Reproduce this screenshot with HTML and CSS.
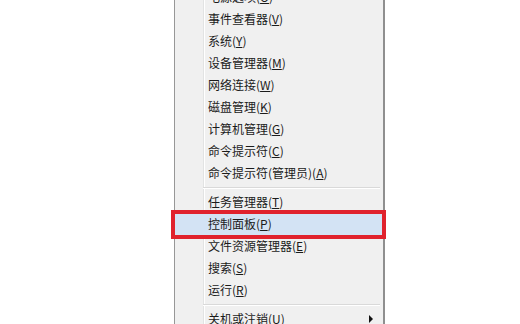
FILE: index.html
```html
<!DOCTYPE html>
<html lang="zh-CN">
<head>
<meta charset="utf-8">
<link rel="stylesheet" href="styles.css">
</head>
<body>
<div class="page">
  <div class="menu">
    <div class="item">电源选项(<u>O</u>)</div>
    <div class="item">事件查看器(<u>V</u>)</div>
    <div class="item">系统(<u>Y</u>)</div>
    <div class="item">设备管理器(<u>M</u>)</div>
    <div class="item">网络连接(<u>W</u>)</div>
    <div class="item">磁盘管理(<u>K</u>)</div>
    <div class="item">计算机管理(<u>G</u>)</div>
    <div class="item">命令提示符(<u>C</u>)</div>
    <div class="item">命令提示符(管理员)(<u>A</u>)</div>
    <div class="sep"></div>
    <div class="item">任务管理器(<u>T</u>)</div>
    <div class="item active">控制面板(<u>P</u>)<span class="mark"></span></div>
    <div class="item">文件资源管理器(<u>E</u>)</div>
    <div class="item">搜索(<u>S</u>)</div>
    <div class="item">运行(<u>R</u>)</div>
    <div class="sep"></div>
    <div class="item sub">关机或注销(<u>U</u>)<span class="arrow"></span></div>
    <div class="item">桌面(<u>D</u>)</div>
  </div>
</div>
</body>
</html>
```
FILE: styles.css
```css
html, body {
  margin: 0;
  padding: 0;
  background: #ffffff;
  overflow: hidden;
}
.page {
  width: 520px;
  height: 324px;
  overflow: hidden;
  display: flex;
}
.menu {
  margin-left: 174px;
  margin-top: -14px;
  width: 208px;
  align-self: flex-start;
  background: #f0f0f0;
  border-left: 1px solid #979797;
  border-right: 2px solid #8f8f8f;
  display: flex;
  flex-direction: column;
  font-family: "Noto Sans CJK SC", "Microsoft YaHei", sans-serif;
  font-size: 12px;
  color: #1b1b1b;
  background-image: linear-gradient(to right, transparent 28px, #e2e3e3 28px, #e2e3e3 29px, #ffffff 29px, #ffffff 30px, transparent 30px);
}
.item {
  position: relative;
  height: 22px;
  line-height: 22px;
  padding-left: 33px;
  white-space: nowrap;
}
.item u {
  text-decoration: underline;
  text-underline-offset: 1px;
}
.item.active {
  background: #d3e3f4;
}
.mark {
  position: absolute;
  left: -4px;
  right: -3px;
  top: -3px;
  bottom: -4px;
  border: 4px solid #e0222d;
}
.sep {
  height: 7px;
  margin-left: 28px;
  margin-right: 3px;
  box-sizing: border-box;
  border-bottom: 0;
  background: linear-gradient(to bottom, transparent 3px, #d9d9d9 3px, #d9d9d9 4px, #ffffff 4px, #ffffff 5px, transparent 5px);
}
.arrow {
  position: absolute;
  left: 194px;
  top: 7px;
  width: 0;
  height: 0;
  border-top: 4px solid transparent;
  border-bottom: 4px solid transparent;
  border-left: 4px solid #111111;
}
```
